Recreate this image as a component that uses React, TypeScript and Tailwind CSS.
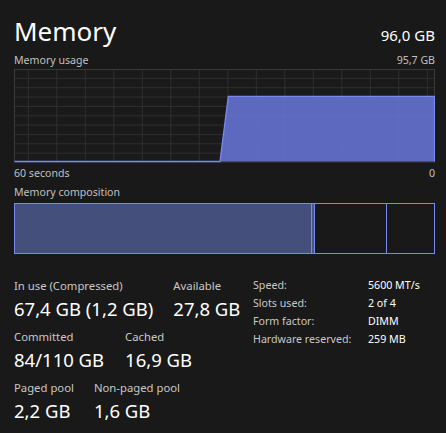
import React from "react";

const font = { fontFamily: '"Noto Sans", "Open Sans", sans-serif' };

function UsageGraph() {
  const W = 421;
  const H = 93.5;
  const vlines: number[] = [];
  for (let x = 14.3; x < W; x += 28.5) vlines.push(x);
  const hlines: number[] = [];
  for (let i = 1; i < 10; i++) hlines.push((H / 10) * i);
  const topY = 27.4;
  return (
    <svg width={W} height={H} viewBox={`0 0 ${W} ${H}`} className="block">
      <rect x="0.5" y="0.5" width={W - 1} height={H - 1} fill="#1a1a1a" stroke="#3a3a3a" />
      {vlines.map((x) => (
        <line key={"v" + x} x1={x} y1={1} x2={x} y2={H - 1} stroke="#2f2f2f" strokeWidth="1" />
      ))}
      {hlines.map((y) => (
        <line key={"h" + y} x1={1} y1={y} x2={W - 1} y2={y} stroke="#2f2f2f" strokeWidth="1" />
      ))}
      <polygon
        points={`206,${H - 1} 214.3,${topY} ${W - 0.5},${topY} ${W - 0.5},${H - 1}`}
        fill="#6472d0"
        fillOpacity="0.9"
      />
      <polyline
        points={`0.5,${H - 1} 206,${H - 1} 214.3,${topY} ${W - 0.5},${topY} ${W - 0.5},${H - 1}`}
        fill="none"
        stroke="#7889f2"
        strokeWidth="1.3"
      />
    </svg>
  );
}

function Stat({ label, value }: { label: string; value: string }) {
  return (
    <div className="flex flex-col">
      <div className="text-[11.3px] leading-[16px] text-[#c8c8c8]">{label}</div>
      <div className="text-[18.5px] leading-[24px] text-white mt-[2.5px]">{value}</div>
    </div>
  );
}

export default function App() {
  return (
    <div
      className="w-[446px] h-[433px] bg-[#191919] pl-[14px] pr-[11px] pt-[14px] overflow-hidden"
      style={font}
    >
      <div className="flex justify-between items-baseline">
        <div className="text-[26px] leading-[34px] text-white">Memory</div>
        <div className="text-[15px] leading-[20px] text-white">96,0 GB</div>
      </div>
      <div className="flex justify-between text-[10.6px] leading-[14px] text-[#c0c0c0] mt-[5px]">
        <span>Memory usage</span>
        <span>95,7 GB</span>
      </div>
      <div className="mt-[2px]">
        <UsageGraph />
      </div>
      <div className="flex justify-between text-[10.6px] leading-[14px] text-[#c0c0c0] mt-[3px]">
        <span>60 seconds</span>
        <span>0</span>
      </div>
      <div className="text-[10.6px] leading-[14px] text-[#c0c0c0] mt-[5px]">Memory composition</div>
      <div className="mt-[4.5px] h-[51px] w-[421px] flex border border-[#7889f2]">
        <div className="w-[297px] bg-[#454f7c] border-r border-[#7889f2]"></div>
        <div className="w-[3px] bg-[#4a5588] border-r border-[#7889f2]"></div>
        <div className="w-[72px] border-r border-[#7889f2]"></div>
        <div className="flex-1"></div>
      </div>
      <div className="grid grid-cols-[239px_1fr] mt-[24px]">
        <div className="flex flex-col gap-[8.5px]">
          <div className="flex gap-[20px]">
            <Stat label="In use (Compressed)" value="67,4 GB (1,2 GB)" />
            <Stat label="Available" value="27,8 GB" />
          </div>
          <div className="flex gap-[21px]">
            <Stat label="Committed" value="84/110 GB" />
            <Stat label="Cached" value="16,9 GB" />
          </div>
          <div className="flex gap-[20px]">
            <Stat label="Paged pool" value="2,2 GB" />
            <Stat label="Non-paged pool" value="1,6 GB" />
          </div>
        </div>
        <div className="grid grid-cols-[115px_1fr] auto-rows-[18px] content-start text-[10.65px] leading-[18px] -mt-[2.4px]">
          <span className="text-[#c8c8c8] whitespace-nowrap">Speed:</span>
          <span className="text-white whitespace-nowrap">5600 MT/s</span>
          <span className="text-[#c8c8c8] whitespace-nowrap">Slots used:</span>
          <span className="text-white whitespace-nowrap">2 of 4</span>
          <span className="text-[#c8c8c8] whitespace-nowrap">Form factor:</span>
          <span className="text-white whitespace-nowrap">DIMM</span>
          <span className="text-[#c8c8c8] whitespace-nowrap">Hardware reserved:</span>
          <span className="text-white whitespace-nowrap">259 MB</span>
        </div>
      </div>
    </div>
  );
}
